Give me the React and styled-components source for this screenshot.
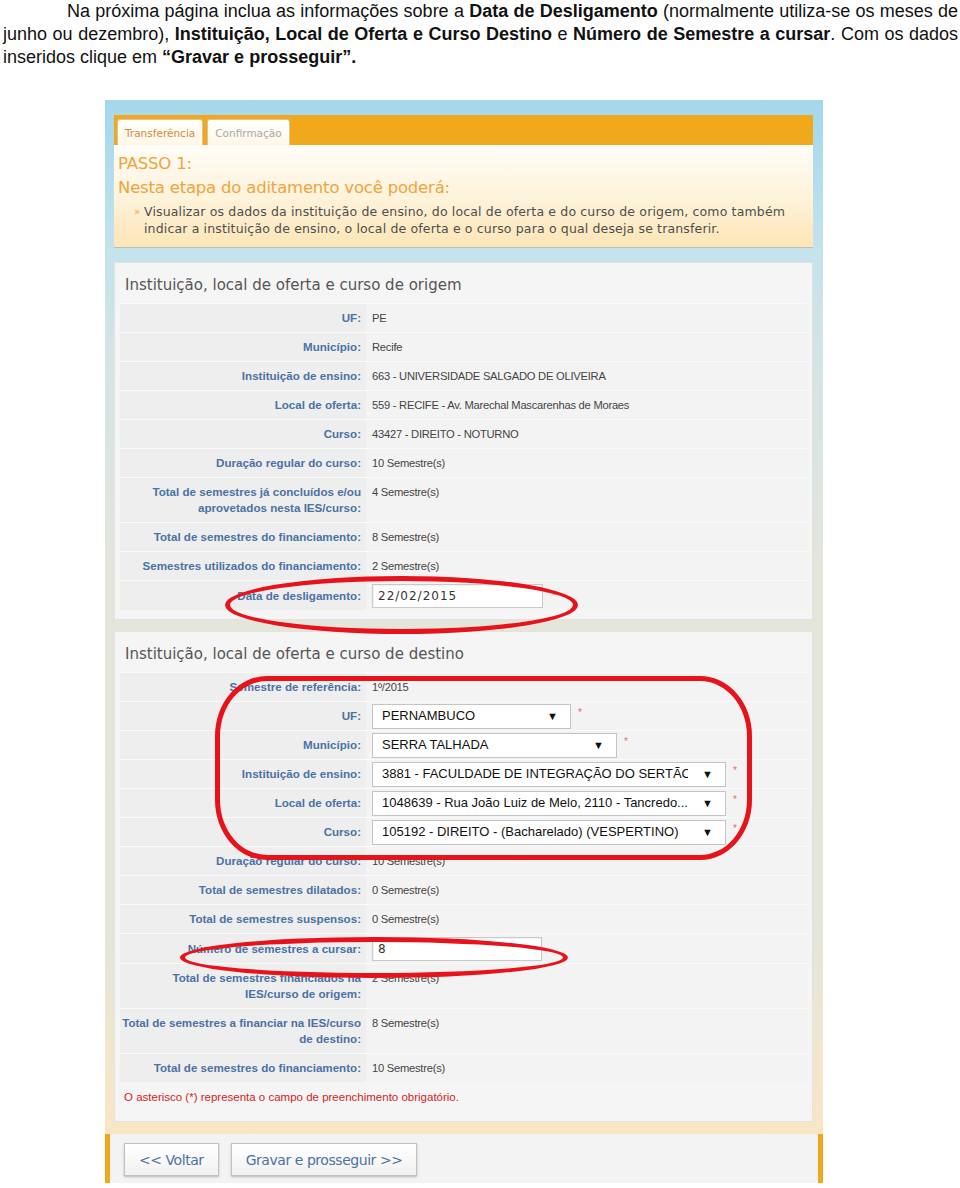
import React from 'react'
import styled, { createGlobalStyle } from 'styled-components'

const GlobalStyle = createGlobalStyle`
  body {
    margin: 0;
    background: #fff;
  }
`;

const origem = [
  { label: 'UF:', value: 'PE' },
  { label: 'Município:', value: 'Recife' },
  { label: 'Instituição de ensino:', value: '663 - UNIVERSIDADE SALGADO DE OLIVEIRA' },
  { label: 'Local de oferta:', value: '559 - RECIFE - Av. Marechal Mascarenhas de Moraes' },
  { label: 'Curso:', value: '43427 - DIREITO - NOTURNO' },
  { label: 'Duração regular do curso:', value: '10 Semestre(s)' },
  { label: ['Total de semestres já concluídos e/ou', 'aprovetados nesta IES/curso:'], value: '4 Semestre(s)' },
  { label: 'Total de semestres do financiamento:', value: '8 Semestre(s)' },
  { label: 'Semestres utilizados do financiamento:', value: '2 Semestre(s)' },
]

const selects = [
  { label: 'UF:', value: 'PERNAMBUCO', w: 199 },
  { label: 'Município:', value: 'SERRA TALHADA', w: 245 },
  { label: 'Instituição de ensino:', value: '3881 - FACULDADE DE INTEGRAÇÃO DO SERTÃO', w: 354 },
  { label: 'Local de oferta:', value: '1048639 - Rua João Luiz de Melo, 2110 - Tancredo...', w: 354 },
  { label: 'Curso:', value: '105192 - DIREITO - (Bacharelado) (VESPERTINO)', w: 354 },
]

function Label({ text }) {
  const lines = Array.isArray(text) ? text : [text]
  return <LabelCell>{lines.map((t, i) => <span key={i}>{t}</span>)}</LabelCell>
}

function InfoRow({ label, value }) {
  const multi = Array.isArray(label)
  return (
    <Row $h={multi ? 45 : 29}>
      <Label text={label} />
      <ValueCell $top={multi}>{value}</ValueCell>
    </Row>
  )
}

export default function App() {
  return (
    <>
      <GlobalStyle />
      <Intro>
        <Line $indent $justify>
          Na próxima página inclua as informações sobre a <b>Data de Desligamento</b> (normalmente utiliza-se os meses de
        </Line>
        <Line $justify>
          junho ou dezembro), <b>Instituição, Local de Oferta e Curso Destino</b> e <b>Número de Semestre a cursar</b>. Com os dados
        </Line>
        <Line>
          inseridos clique em <b>“Gravar e prosseguir”.</b>
        </Line>
      </Intro>

      <Frame>
        <Inner>
          <Header>
            <TabBar>
              <Tab $active>Transferência</Tab>
              <Tab>Confirmação</Tab>
            </TabBar>
            <Intro2>
              <Step>PASSO 1:</Step>
              <Step>Nesta etapa do aditamento você poderá:</Step>
              <Bullet>
                <Mark>»</Mark>
                <span>
                  Visualizar os dados da instituição de ensino, do local de oferta e do curso de origem, como também
                  <br />
                  indicar a instituição de ensino, o local de oferta e o curso para o qual deseja se transferir.
                </span>
              </Bullet>
            </Intro2>
          </Header>

          <Panel>
            <PanelTitle>Instituição, local de oferta e curso de origem</PanelTitle>
            {origem.map((r, i) => <InfoRow key={i} label={r.label} value={r.value} />)}
            <Row $h={30}>
              <Label text="Data de desligamento:" />
              <ValueCell>
                <TextInput readOnly value="22/02/2015" $w={171} $spaced />
                <Req $mid>*</Req>
              </ValueCell>
            </Row>
          </Panel>

          <Panel $second>
            <PanelTitle>Instituição, local de oferta e curso de destino</PanelTitle>
            <InfoRow label="Semestre de referência:" value="1º/2015" />
            {selects.map((s, i) => (
              <Row key={i} $h={29}>
                <Label text={s.label} />
                <ValueCell>
                  <SelectBox $w={s.w}>
                    <SelectText>{s.value}</SelectText>
                    <Arrow>▼</Arrow>
                  </SelectBox>
                  <Req>*</Req>
                </ValueCell>
              </Row>
            ))}
            <InfoRow label="Duração regular do curso:" value="10 Semestre(s)" />
            <InfoRow label="Total de semestres dilatados:" value="0 Semestre(s)" />
            <InfoRow label="Total de semestres suspensos:" value="0 Semestre(s)" />
            <Row $h={30}>
              <Label text="Número de semestres a cursar:" />
              <ValueCell>
                <TextInput readOnly value="8" $w={170} />
              </ValueCell>
            </Row>
            <InfoRow label={['Total de semestres financiados na', 'IES/curso de origem:']} value="2 Semestre(s)" />
            <InfoRow label={['Total de semestres a financiar na IES/curso', 'de destino:']} value="8 Semestre(s)" />
            <InfoRow label="Total de semestres do financiamento:" value="10 Semestre(s)" />
            <Note>O asterisco (*) representa o campo de preenchimento obrigatório.</Note>
          </Panel>
        </Inner>

        <ButtonBar>
          <Button>&lt;&lt; Voltar</Button>
          <Button>Gravar e prosseguir &gt;&gt;</Button>
        </ButtonBar>

        <Ring style={{ left: 120, top: 476, width: 353, height: 58 }} />
        <Ring $box style={{ left: 110, top: 576, width: 537, height: 184 }} />
        <Ring style={{ left: 75, top: 837, width: 388, height: 41 }} />
      </Frame>
    </>
  )
}

const Intro = styled.div`
  padding: 0 2px 0 3px;
  font-family: "Liberation Sans", sans-serif;
  font-size: 18px;
  line-height: 23px;
  color: #111;
  b { font-weight: 700; }
`;

const Line = styled.div`
  white-space: nowrap;
  text-indent: ${p => (p.$indent ? '64px' : '0')};
  text-align: ${p => (p.$justify ? 'justify' : 'left')};
  text-align-last: ${p => (p.$justify ? 'justify' : 'left')};
  ${p => p.$justify && 'white-space: normal;'}
`;

const Frame = styled.div`
  position: relative;
  width: 718px;
  margin: 31px 0 0 105px;
  background: linear-gradient(180deg, #a3d8ea 0px, #c4e3ec 150px, #d6e4e4 280px, #e4e6db 480px, #e6e6d8 850px, #f6e6c8 1000px, #fbe5bd 100%);
`;

const Inner = styled.div`
  padding: 15px 10px 12px 9px;
`;

const Header = styled.div`
  border-bottom: 1px solid #bdbdbd;
`;

const TabBar = styled.div`
  display: flex;
  gap: 4px;
  height: 30px;
  padding: 4px 0 0 3px;
  box-sizing: border-box;
  align-items: flex-end;
  background: #f2a81c;
`;

const Tab = styled.div`
  height: 26px;
  box-sizing: border-box;
  padding: 0 7px;
  display: flex;
  align-items: center;
  background: linear-gradient(#ffffff, #fff6e6);
  border: 1px solid #d9c49c;
  border-bottom: none;
  border-radius: 3px 3px 0 0;
  font-family: "DejaVu Sans", sans-serif;
  font-size: 10.5px;
  letter-spacing: 0;
  color: ${p => (p.$active ? '#d38b38' : '#a8a8a8')};
`;

const Intro2 = styled.div`
  padding: 7px 4px 10px 4px;
  background: linear-gradient(180deg, #fffdf8 0%, #fef3dc 50%, #fde5b6 100%);
`;

const Step = styled.div`
  font-family: "DejaVu Sans", sans-serif;
  font-size: 16.5px;
  letter-spacing: -0.2px;
  line-height: 24px;
  color: #f0a43a;
`;

const Bullet = styled.div`
  display: flex;
  margin: 3px 0 0 16px;
  font-family: "DejaVu Sans", sans-serif;
  font-size: 12.5px;
  letter-spacing: 0.15px;
  line-height: 17px;
  white-space: nowrap;
  color: #4e4e4e;
`;

const Mark = styled.span`
  flex: 0 0 10px;
  color: #f0a43a;
  font-size: 10px;
`;

const Panel = styled.div`
  margin-top: ${p => (p.$second ? '11px' : '14px')};
  padding: 0 5px 9px 5px;
  background: #f5f5f5;
  border: 1px solid #e2e2e2;
`;

const PanelTitle = styled.div`
  height: 40px;
  padding: 2px 0 0 5px;
  box-sizing: border-box;
  line-height: 40px;
  font-family: "DejaVu Sans", sans-serif;
  font-size: 15px;
  letter-spacing: 0;
  color: #555;
`;

const Row = styled.div`
  display: grid;
  grid-template-columns: 246px 1fr;
  min-height: ${p => p.$h}px;
  box-sizing: border-box;
  border-top: 1px solid #fafafa;
`;

const LabelCell = styled.div`
  display: flex;
  flex-direction: column;
  justify-content: center;
  align-items: flex-end;
  padding-right: 5px;
  background: #eeeeee;
  font-family: "Liberation Sans", sans-serif;
  font-weight: 700;
  font-size: 11.6px;
  line-height: 16px;
  color: #4a72a5;
  text-align: right;
  white-space: nowrap;
`;

const ValueCell = styled.div`
  display: flex;
  align-items: ${p => (p.$top ? 'flex-start' : 'center')};
  padding: ${p => (p.$top ? '6px 0 0 6px' : '0 0 0 6px')};
  background: #f3f3f3;
  font-family: "Liberation Sans", sans-serif;
  font-size: 11.2px;
  letter-spacing: -0.25px;
  line-height: 16px;
  color: #444;
`;

const TextInput = styled.input`
  width: ${p => p.$w}px;
  height: 24px;
  box-sizing: border-box;
  padding: 0 5px;
  border: 1px solid #c9c9c9;
  background: #fff;
  box-shadow: inset 1px 1px 1px rgba(0, 0, 0, 0.06);
  font-family: "DejaVu Sans", sans-serif;
  font-size: 12px;
  letter-spacing: ${p => (p.$spaced ? '1px' : '0')};
  color: #333;
  outline: none;
`;

const SelectBox = styled.div`
  width: ${p => p.$w}px;
  height: 25px;
  box-sizing: border-box;
  display: flex;
  align-items: center;
  padding: 0 12px 0 9px;
  background: #fff;
  border: 1px solid #c4c4c4;
  font-family: "Liberation Sans", sans-serif;
  font-size: 13px;
  letter-spacing: 0;
  color: #111;
`;

const SelectText = styled.span`
  flex: 1;
  overflow: hidden;
  white-space: nowrap;
  margin-right: 14px;
`;

const Arrow = styled.span`
  font-size: 11px;
  color: #111;
`;

const Req = styled.span`
  align-self: ${p => (p.$mid ? 'center' : 'flex-start')};
  margin: ${p => (p.$mid ? '0 0 0 9px' : '3px 0 0 7px')};
  font-family: "Liberation Sans", sans-serif;
  font-size: 10px;
  color: #e46a6a;
`;

const Note = styled.div`
  height: 30px;
  line-height: 30px;
  padding-left: 4px;
  font-family: "Liberation Sans", sans-serif;
  font-size: 11.5px;
  color: #d42424;
`;

const ButtonBar = styled.div`
  display: flex;
  gap: 12px;
  padding: 9px 14px 7px;
  background: #f3f3f3;
  border-left: 5px solid #f2a81c;
  border-right: 5px solid #f2a81c;
`;

const Button = styled.div`
  height: 33px;
  box-sizing: border-box;
  padding: 0 14px;
  display: flex;
  align-items: center;
  background: linear-gradient(#ffffff, #f1f1f1);
  border: 1px solid #c2c2c2;
  box-shadow: 0 1px 2px rgba(0, 0, 0, 0.25);
  font-family: "DejaVu Sans", sans-serif;
  font-size: 14px;
  letter-spacing: -0.45px;
  color: #4d72a3;
`;

const Ring = styled.div`
  position: absolute;
  box-sizing: border-box;
  border: 5px solid #e8121b;
  border-radius: ${p => (p.$box ? '52px / 60px' : '50%')};
  pointer-events: none;
`;
